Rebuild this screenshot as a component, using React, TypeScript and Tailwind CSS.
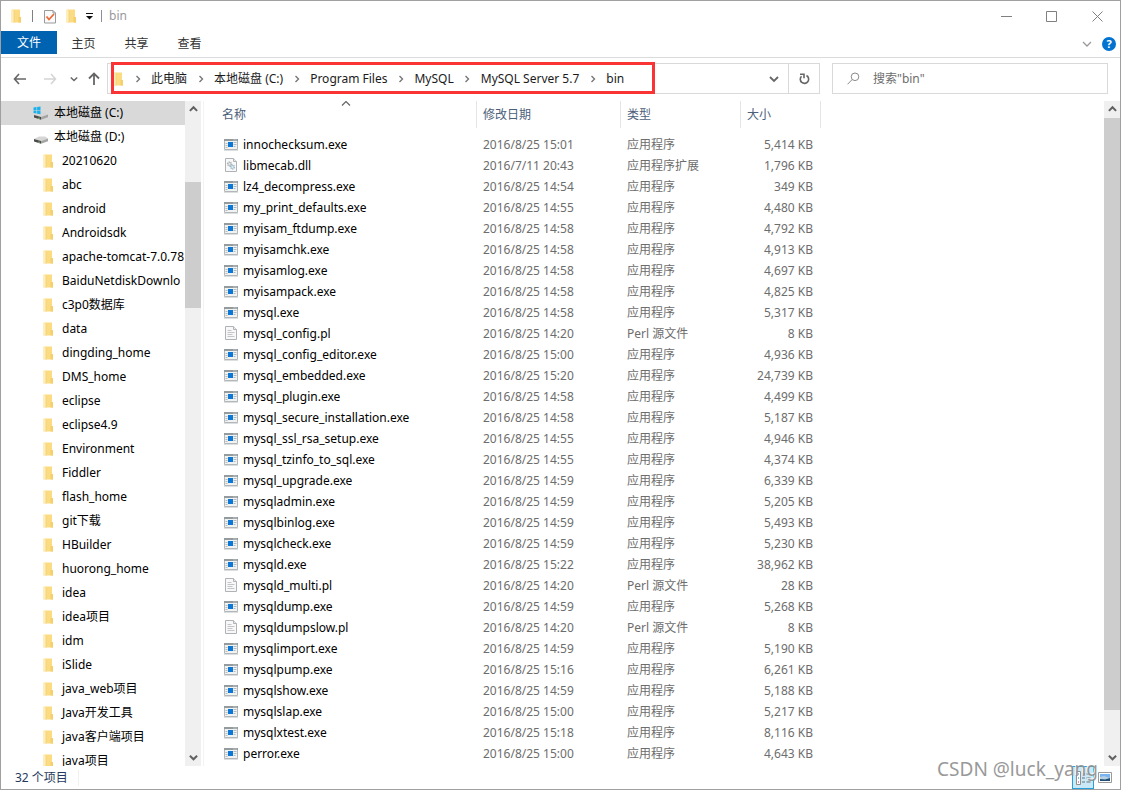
import React from "react";

type Kind = "exe" | "dll" | "pl";
type FileRow = { name: string; date: string; size: string; kind: Kind };

const kindLabels: Record<Kind, string> = {
  exe: "应用程序",
  dll: "应用程序扩展",
  pl: "Perl 源文件",
};

const file = (name: string, date: string, size: string): FileRow => ({
  name,
  date,
  size,
  kind: name.split(".").pop() as Kind,
});

const files: FileRow[] = [
  file("innochecksum.exe", "2016/8/25 15:01", "5,414 KB"),
  file("libmecab.dll", "2016/7/11 20:43", "1,796 KB"),
  file("lz4_decompress.exe", "2016/8/25 14:54", "349 KB"),
  file("my_print_defaults.exe", "2016/8/25 14:55", "4,480 KB"),
  file("myisam_ftdump.exe", "2016/8/25 14:58", "4,792 KB"),
  file("myisamchk.exe", "2016/8/25 14:58", "4,913 KB"),
  file("myisamlog.exe", "2016/8/25 14:58", "4,697 KB"),
  file("myisampack.exe", "2016/8/25 14:58", "4,825 KB"),
  file("mysql.exe", "2016/8/25 14:58", "5,317 KB"),
  file("mysql_config.pl", "2016/8/25 14:20", "8 KB"),
  file("mysql_config_editor.exe", "2016/8/25 15:00", "4,936 KB"),
  file("mysql_embedded.exe", "2016/8/25 15:20", "24,739 KB"),
  file("mysql_plugin.exe", "2016/8/25 14:58", "4,499 KB"),
  file("mysql_secure_installation.exe", "2016/8/25 14:58", "5,187 KB"),
  file("mysql_ssl_rsa_setup.exe", "2016/8/25 14:55", "4,946 KB"),
  file("mysql_tzinfo_to_sql.exe", "2016/8/25 14:55", "4,374 KB"),
  file("mysql_upgrade.exe", "2016/8/25 14:59", "6,339 KB"),
  file("mysqladmin.exe", "2016/8/25 14:59", "5,205 KB"),
  file("mysqlbinlog.exe", "2016/8/25 14:59", "5,493 KB"),
  file("mysqlcheck.exe", "2016/8/25 14:59", "5,230 KB"),
  file("mysqld.exe", "2016/8/25 15:22", "38,962 KB"),
  file("mysqld_multi.pl", "2016/8/25 14:20", "28 KB"),
  file("mysqldump.exe", "2016/8/25 14:59", "5,268 KB"),
  file("mysqldumpslow.pl", "2016/8/25 14:20", "8 KB"),
  file("mysqlimport.exe", "2016/8/25 14:59", "5,190 KB"),
  file("mysqlpump.exe", "2016/8/25 15:16", "6,261 KB"),
  file("mysqlshow.exe", "2016/8/25 14:59", "5,188 KB"),
  file("mysqlslap.exe", "2016/8/25 15:00", "5,217 KB"),
  file("mysqlxtest.exe", "2016/8/25 15:18", "8,116 KB"),
  file("perror.exe", "2016/8/25 15:00", "4,643 KB"),
];

const folders = [
  "20210620",
  "abc",
  "android",
  "Androidsdk",
  "apache-tomcat-7.0.78",
  "BaiduNetdiskDownlo",
  "c3p0数据库",
  "data",
  "dingding_home",
  "DMS_home",
  "eclipse",
  "eclipse4.9",
  "Environment",
  "Fiddler",
  "flash_home",
  "git下载",
  "HBuilder",
  "huorong_home",
  "idea",
  "idea项目",
  "idm",
  "iSlide",
  "java_web项目",
  "Java开发工具",
  "java客户端项目",
  "java项目",
];

const crumbs = ["此电脑", "本地磁盘 (C:)", "Program Files", "MySQL", "MySQL Server 5.7", "bin"];

function FolderIcon() {
  return (
    <svg width="12" height="14" viewBox="0 0 12 14" className="shrink-0" aria-hidden="true">
      <path d="M2 0.500h8v7.500l1 1v4.500H2z" fill="#fbdc82" />
      <path d="M8.500 8h2.500v5.500H8.500z" fill="#f5cf6b" />
      <path d="M1 0.500l3 1.200V13.500H1z" fill="#fdeebd" />
      <path d="M4 1.700v11.800" stroke="#f0cb6c" strokeWidth="0.600" />
    </svg>
  );
}

function ExeIcon() {
  return (
    <svg width="14" height="12" viewBox="0 0 14 12" className="block shrink-0" aria-hidden="true">
      <path d="M0.500 0.500h13v10h-13z" fill="#f1f2f2" stroke="#b3b7b9" />
      <path d="M0 0h14v2H0z" fill="#949b9f" />
      <path d="M9.500 1h1M11.500 1h1" stroke="#dfe3e5" />
      <path d="M1.500 4.500h2M1.500 6.500h2M1.500 8.500h2M9.500 3.500h3M9.500 5.500h3M9.500 7.500h2" stroke="#b4babd" />
      <path d="M4 3h5v5H4z" fill="#0b78d7" />
      <path d="M0 11.500h14" stroke="#dcdfe0" />
    </svg>
  );
}

function PageIcon({ gears }: { gears?: boolean }) {
  return (
    <svg width="14" height="15" viewBox="0 0 14 15" className="block shrink-0" aria-hidden="true">
      <path d="M1.500 0.500h8l3 3v10h-11z" fill="#f8f8f8" stroke="#b0b3b5" />
      <path d="M9.500 0.500v3h3" fill="#e8e8e8" stroke="#b0b3b5" />
      {gears ? (
        <>
          <circle cx="5.500" cy="6" r="1.800" fill="#e4e6e7" stroke="#a3a8ab" strokeWidth="1.300" strokeDasharray="1.200 0.500" />
          <circle cx="8.500" cy="9" r="1.800" fill="#d9ebf7" stroke="#94b4c8" strokeWidth="1.300" strokeDasharray="1.200 0.500" />
        </>
      ) : (
        <path d="M3.500 4.500h4M3.500 6.500h7M3.500 8.500h5M3.500 10.500h7" stroke="#c3c6c8" />
      )}
    </svg>
  );
}

function DriveIcon({ windows }: { windows?: boolean }) {
  return (
    <svg width="16" height="16" viewBox="0 0 16 16" className="shrink-0" aria-hidden="true">
      <path d="M1 10l5-2.500h6l3 2-7 2.500z" fill="#d6d6d6" />
      <path d="M1 10l7 2v2.800L1 12.500z" fill="#4a4a4a" />
      <path d="M8 12l7-2.500v2.700l-7 2.600z" fill="#a4a4a4" />
      <path d="M5 13.200h2" stroke="#8bd36a" strokeWidth="0.800" />
      {windows && (
        <path d="M0.500 2.500l3-.5v3h-3zM4.100 1.900L7.500 1.400V5H4.100zM0.500 5.600h3v3l-3-.5zM4.100 5.600h3.400v3.600l-3.400-.5z" fill="#19b1ec" />
      )}
    </svg>
  );
}

type Direction = "up" | "down" | "right";
const chevrons: Record<Direction, string> = {
  up: "M1 6.500L5 2.500L9 6.500",
  down: "M1 3L5 7L9 3",
  right: "M3.500 2L6.500 5L3.500 8",
};

function Chevron({ dir, size = 10, width = 1.5 }: { dir: Direction; size?: number; width?: number }) {
  return (
    <svg width={size} height={size} viewBox="0 0 10 10" fill="none" stroke="currentColor" strokeWidth={width} className="shrink-0" aria-hidden="true">
      <path d={chevrons[dir]} />
    </svg>
  );
}

function Scrollbar({ thumb, label }: { thumb: string; label: string }) {
  return (
    <div className="flex w-4 shrink-0 flex-col bg-[#f0f0f0] text-[#606060]">
      <button aria-label={`${label}向上滚动`} className="flex h-[17px] items-center justify-center">
        <Chevron dir="up" size={9} width={2.2} />
      </button>
      <div className="flex-1">
        <div className={thumb} />
      </div>
      <button aria-label={`${label}向下滚动`} className="flex h-[17px] items-center justify-center">
        <Chevron dir="down" size={9} width={2.2} />
      </button>
    </div>
  );
}

function TitleBar() {
  return (
    <header className="flex h-[30px] shrink-0 items-center pl-[9px]">
      <FolderIcon />
      <span className="ml-[10px] h-3 w-px bg-[#808080]" />
      <button aria-label="属性" className="ml-[10px]">
        <svg width="14" height="15" viewBox="0 0 14 15" className="block">
          <path d="M1.500 1.500h8.500l2.500 2.500v10h-11z" fill="#fafafa" stroke="#9a9a9a" />
          <path d="M10 1.500v2.500h2.500" fill="none" stroke="#9a9a9a" />
          <path d="M3.500 7.500l2.500 3 5-5.500" fill="none" stroke="#ee6a35" strokeWidth="1.800" />
        </svg>
      </button>
      <button aria-label="新建文件夹" className="ml-2">
        <FolderIcon />
      </button>
      <button aria-label="自定义快速访问工具栏" className="ml-2">
        <svg width="9" height="8" viewBox="0 0 9 8" className="block">
          <path d="M1 1.500h7" stroke="#111" />
          <path d="M1 4h7L4.500 7.500z" fill="#111" />
        </svg>
      </button>
      <span className="ml-[7px] h-3 w-px bg-[#909090]" />
      <h1 className="ml-[7px] text-[#999999]">bin</h1>
      <div className="ml-auto flex text-[#808080]">
        <button aria-label="最小化" className="flex w-[45px] justify-center">
          <svg width="11" height="11" viewBox="0 0 11 11" stroke="currentColor"><path d="M0 5.500h11" /></svg>
        </button>
        <button aria-label="最大化" className="flex w-[45px] justify-center">
          <svg width="11" height="11" viewBox="0 0 11 11" stroke="currentColor" fill="none"><path d="M0.500 0.500h10v10h-10z" /></svg>
        </button>
        <button aria-label="关闭" className="flex w-[46px] justify-center">
          <svg width="11" height="11" viewBox="0 0 11 11" stroke="currentColor"><path d="M0.500 0.500l10 10M10.500 0.500l-10 10" /></svg>
        </button>
      </div>
    </header>
  );
}

function Ribbon() {
  return (
    <nav className="flex h-[27px] shrink-0 items-start border-b border-[#dadbdc] text-[#333333]">
      <button className="h-[23px] w-14 bg-[#0063b1] text-white">文件</button>
      {["主页", "共享", "查看"].map((tab) => (
        <button key={tab} className="h-[25px] w-[53px]">
          {tab}
        </button>
      ))}
      <button aria-label="展开功能区" className="ml-auto flex h-[26px] items-center text-[#999999]">
        <Chevron dir="down" width={1.3} />
      </button>
      <button aria-label="帮助" className="mr-1 ml-[10px] flex h-[26px] items-center">
        <span className="flex size-[14px] items-center justify-center rounded-full bg-[#0072cf] text-[11px] font-bold text-white">?</span>
      </button>
    </nav>
  );
}

function AddressRow() {
  return (
    <div className="flex h-[43px] shrink-0 items-center pr-3 pb-[2px] text-[#666666]">
      <button aria-label="后退" className="ml-3">
        <svg width="14" height="12" viewBox="0 0 14 12" fill="none" stroke="currentColor" strokeWidth="1.600" className="block"><path d="M6 1L1.500 6L6 11M1.500 6H13" /></svg>
      </button>
      <button aria-label="前进" className="ml-4 text-[#d4d4d4]">
        <svg width="14" height="12" viewBox="0 0 14 12" fill="none" stroke="currentColor" strokeWidth="1.500" className="block"><path d="M8 1l4.500 5L8 11M12.500 6H1" /></svg>
      </button>
      <button aria-label="最近位置" className="ml-[13px]">
        <Chevron dir="down" size={8} width={1.8} />
      </button>
      <button aria-label="上移" className="ml-[10px]">
        <svg width="12" height="14" viewBox="0 0 12 14" fill="none" stroke="currentColor" strokeWidth="1.800" className="block"><path d="M1 6.500L6 1.500L11 6.500M6 1.500V13" /></svg>
      </button>
      <div className="relative ml-[7px] flex h-[31px] flex-1 items-center border border-[#d9d9d9]">
        <div className="absolute -top-[2px] left-[3px] h-8 w-[544px] border-[3px] border-[#fa3434]" />
        <span className="ml-1"><FolderIcon /></span>
        <ol className="flex min-w-0 flex-1 items-center whitespace-nowrap text-[#1b1b1b]">
          {crumbs.map((crumb) => (
            <li key={crumb} className="flex items-center">
              <span className="flex w-[27px] justify-center text-[#777777]">
                <Chevron dir="right" width={1.4} />
              </span>
              <a href="#" className="text-inherit">{crumb}</a>
            </li>
          ))}
        </ol>
        <button aria-label="以前的位置" className="flex h-full w-[29px] items-center justify-center">
          <Chevron dir="down" width={1.8} />
        </button>
        <button aria-label="刷新" className="flex h-full w-[31px] items-center justify-center border-l border-[#d9d9d9]">
          <svg width="11" height="12" viewBox="0 0 11 12" fill="none" stroke="currentColor" strokeWidth="1.600">
            <path d="M7.500 2.500A4.200 4.200 0 1 1 2.500 3.200" />
            <path d="M1 1.200h4v4" />
          </svg>
        </button>
      </div>
      <label className="ml-3 flex h-[31px] w-[276px] items-center border border-[#d9d9d9] pl-[14px]">
        <svg width="13" height="13" viewBox="0 0 13 13" fill="none" stroke="#8a8a8a" className="shrink-0" aria-hidden="true">
          <circle cx="8" cy="4.800" r="3.800" />
          <path d="M5.200 7.500L0.500 12.300" />
        </svg>
        <input aria-label="搜索" placeholder={'搜索"bin"'} className="ml-[13px] min-w-0 flex-1 outline-none placeholder:text-[#6d6d6d]" />
      </label>
    </div>
  );
}

function Sidebar() {
  return (
    <aside className="flex w-[203px] shrink-0 border-r border-[#f3f3f3] pr-[2px]">
      <ul className="min-w-0 flex-1 overflow-hidden whitespace-nowrap">
        <li className="flex h-6 items-center gap-[5px] bg-[#d9d9d9] pl-8">
          <DriveIcon windows />
          本地磁盘 (C:)
        </li>
        <li className="flex h-6 items-center gap-[5px] pl-8">
          <DriveIcon />
          本地磁盘 (D:)
        </li>
        {folders.map((name) => (
          <li key={name} className="flex h-6 items-center gap-2 pl-[41px]">
            <FolderIcon />
            {name}
          </li>
        ))}
      </ul>
      <Scrollbar label="导航窗格" thumb="mt-16 h-[126px] bg-[#cdcdcd]" />
    </aside>
  );
}

function FileTable() {
  return (
    <main className="flex min-w-0 flex-1 pl-[9px]">
      <div className="min-w-0 flex-1 overflow-hidden">
        <table className="w-[608px] table-fixed border-separate border-spacing-0 whitespace-nowrap text-[#6d6d6d]">
          <thead className="text-[#4c607a]">
            <tr className="h-[27px] text-left">
              <th className="relative w-[264px] border-r border-[#e5e5e5] pl-[9px] font-normal">
                名称
                <span className="absolute -top-[2px] left-[128px] text-[#666666]">
                  <Chevron dir="up" width={1.2} />
                </span>
              </th>
              <th className="w-36 border-r border-[#e5e5e5] pl-[6px] font-normal">修改日期</th>
              <th className="w-[120px] border-r border-[#e5e5e5] pl-[6px] font-normal">类型</th>
              <th className="w-20 border-r border-[#e5e5e5] pl-[6px] font-normal">大小</th>
            </tr>
          </thead>
          <tbody className="before:block before:h-[6px]">
            {files.map((row) => (
              <tr key={row.name} className="h-[21px]">
                <td className="pl-[11px] text-black">
                  <span className="flex items-center gap-[5px]">
                    {row.kind === "exe" ? <ExeIcon /> : <PageIcon gears={row.kind === "dll"} />}
                    {row.name}
                  </span>
                </td>
                <td className="pl-[6px]">{row.date}</td>
                <td className="pl-[6px]">{kindLabels[row.kind]}</td>
                <td className="pr-2 text-right">{row.size}</td>
              </tr>
            ))}
          </tbody>
        </table>
      </div>
      <Scrollbar label="文件列表" thumb="h-[592px] bg-[#cdcdcd]" />
    </main>
  );
}

function StatusBar() {
  return (
    <footer className="relative flex h-[23px] shrink-0 items-center pl-[14px] text-[#26395c]">
      <span className="border-r border-[#f0f0f0] pr-[10px]">32 个项目</span>
      <button aria-label="详细信息" className="ml-auto flex h-full w-[22px] items-center justify-center border border-[#26a0da] bg-[#cbe8f6]">
        <svg width="16" height="14" viewBox="0 0 16 14" fill="none">
          <path d="M1.500 0.500h4v13h-4z" fill="#fff" stroke="#8f8f8f" />
          <path d="M3 3h1M3 7h1" stroke="#2878c8" />
          <path d="M3 11h1" stroke="#d03030" />
          <path d="M7 3h3M11.500 3h4M7 7h3M11.500 7h4M7 11h3M11.500 11h4" stroke="#667580" />
        </svg>
      </button>
      <button aria-label="大缩略图" className="mr-2 ml-1 flex">
        <svg width="14" height="11" viewBox="0 0 14 11">
          <path d="M0.500 0.500h13v10h-13z" fill="#fff" stroke="#9a9a9a" />
          <path d="M2 2h10v4H2z" fill="#79b4f0" />
          <path d="M2 5l4-1 6 2v3H2z" fill="#b9cfe2" />
          <path d="M2 7l5 .500 5-1.500v3H2z" fill="#1f4f74" />
        </svg>
      </button>
      <span className="pointer-events-none absolute right-[22px] bottom-[6px] text-[19px] leading-7 text-[#8f8f8f] opacity-90 [text-shadow:-1px_-1px_0_#ffffff]">
        CSDN @luck_yang
      </span>
    </footer>
  );
}

export default function App() {
  return (
    <div className="flex h-screen flex-col overflow-hidden border border-[#a0a0a0] bg-white font-['Noto_Sans','Noto_Sans_CJK_SC',sans-serif] text-[12px] leading-4 text-black">
      <TitleBar />
      <Ribbon />
      <AddressRow />
      <div className="flex min-h-0 flex-1">
        <Sidebar />
        <FileTable />
      </div>
      <StatusBar />
    </div>
  );
}
